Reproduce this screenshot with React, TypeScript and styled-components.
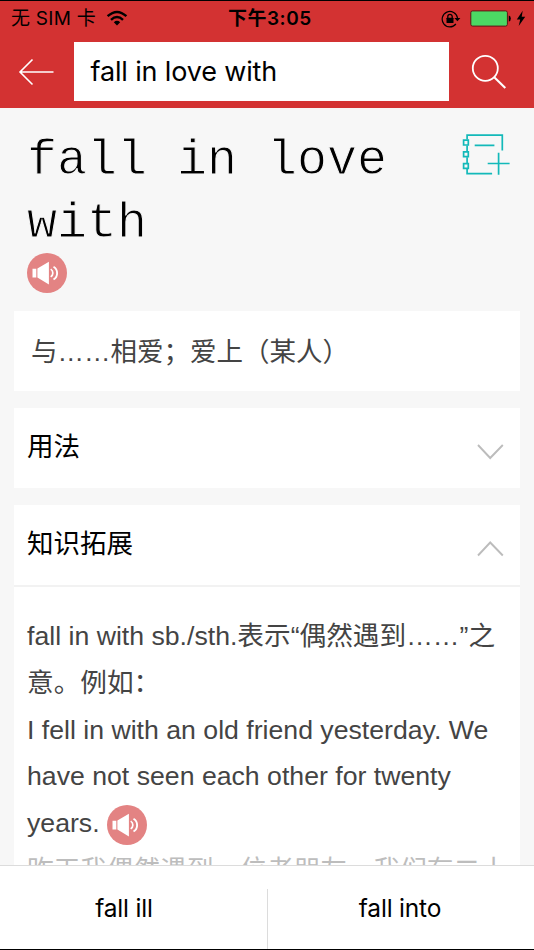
import React from "react";
import styled, { createGlobalStyle } from "styled-components";

const UI_FONT = `Inter, "Noto Sans CJK SC", sans-serif`;
const BODY_FONT = `"Liberation Sans", "Noto Sans CJK SC", sans-serif`;

const GlobalStyle = createGlobalStyle`
  * { box-sizing: border-box; }
  body { margin: 0; background: #f7f7f7; }
  p, h1, h2 { margin: 0; font-weight: 400; }
  button { border: 0; padding: 0; background: none; display: block; }
  svg { display: block; }
`;

const Screen = styled.div`
  width: 534px;
  height: 950px;
  display: flex;
  flex-direction: column;
  overflow: hidden;
  background: #f7f7f7;
  border-top: 1px solid #000;
  border-bottom: 1px solid #000;
`;

const Header = styled.header`
  flex: none;
  height: 107px;
  background: #d33232;
`;

const StatusBar = styled.div`
  height: 41px;
  padding: 0 8px 7px 11px;
  display: grid;
  grid-template-columns: 217px 1fr auto;
  align-items: center;
  font-family: ${UI_FONT};
  font-size: 19px;
  line-height: 34px;
  color: #000;
`;

const StatusGroup = styled.div<{ $gap: number }>`
  display: flex;
  align-items: center;
  gap: ${(p) => p.$gap}px;
  white-space: nowrap;
`;

const CarrierName = styled.span`
  letter-spacing: 0.25px;
`;

const Clock = styled.span`
  padding-top: 1px;
  font-weight: 600;
  font-size: 19px;
  letter-spacing: 0.5px;
  white-space: nowrap;
`;

const SearchRow = styled.div`
  height: 59px;
  display: grid;
  grid-template-columns: 73.5px 375px 85px;
`;

const IconButton = styled.button<{ $nudge?: number }>`
  display: flex;
  align-items: center;
  justify-content: center;
  padding-right: ${(p) => p.$nudge ?? 0}px;
`;

const SearchField = styled.div`
  background: #fff;
  padding-left: 17px;
  font: 400 27px/59px ${UI_FONT};
  letter-spacing: -0.15px;
  white-space: nowrap;
  color: #000;
`;

const Content = styled.main`
  flex: 1;
  min-height: 0;
  overflow: hidden;
  padding: 0 14px 0 13.5px;
`;

const TitleBlock = styled.section`
  height: 203px;
  padding: 21px 9px 0 13.5px;
  display: flex;
  justify-content: space-between;
`;

const Headword = styled.h1`
  width: 400px;
  margin-bottom: -2px;
  font: 400 50px/63px "Liberation Mono", monospace;
  -webkit-text-stroke: 1px #f7f7f7;
  color: #000;
`;

const NotebookSlot = styled.div`
  padding: 5px 1px 0 0;
`;

const Card = styled.section<{ $height?: number }>`
  background: #fff;
  margin-bottom: 17px;
  height: ${(p) => (p.$height ? `${p.$height}px` : "auto")};
`;

const Meaning = styled.p`
  padding: 1px 17.5px;
  font: 400 26.5px/81px ${BODY_FONT};
  color: #444;
  white-space: nowrap;
`;

const CardHeader = styled.div`
  height: 80px;
  padding: 0 16px 0 13.5px;
  display: flex;
  justify-content: space-between;
`;

const CardTitle = styled.h2`
  font: 400 26.5px/78px ${BODY_FONT};
  color: #000;
`;

const ChevronSlot = styled.div`
  padding-top: 35px;
`;

const CardBody = styled.div`
  border-top: 2px solid #f2f2f2;
  padding: 26px 0 0 13.5px;
`;

const TextLine = styled.p<{ $muted?: boolean }>`
  height: 46.8px;
  display: flex;
  align-items: center;
  gap: 7px;
  font: 400 26.67px/46.8px ${BODY_FONT};
  color: ${(p) => (p.$muted ? "#bdbdbd" : "#444")};
  white-space: nowrap;
`;

const InlineSound = styled.span`
  padding-top: 2px;
`;

const BottomBar = styled.nav`
  flex: none;
  height: 84px;
  border-top: 1px solid #dcdcdc;
  background: #fff;
  display: grid;
  grid-template-columns: 267px 267px;
`;

const NavItem = styled.div<{ $divided?: boolean }>`
  margin-top: ${(p) => (p.$divided ? 23 : 0)}px;
  border-left: ${(p) => (p.$divided ? "1px solid #dcdcdc" : "0")};
  padding-right: ${(p) => (p.$divided ? 2 : 19)}px;
  font: 400 24.5px/${(p) => (p.$divided ? 38 : 84)}px ${UI_FONT};
  letter-spacing: -0.2px;
  text-align: center;
  color: #000;
`;

const Wifi = () => (
  <svg width="22" height="17" viewBox="0 0 22 17">
    <g fill="none" stroke="#000" strokeWidth="2.4">
      <path d="M1.6 6.2Q11-2.4 20.4 6.2" />
      <path d="M5 9.8Q11 4.2 17 9.8" />
    </g>
    <path d="M7.8 12.2Q11 9.4 14.2 12.2L11 15.6Z" fill="#000" />
  </svg>
);

const RotationLock = () => (
  <svg width="20" height="18" viewBox="0 0 20 18">
    <path d="M14.9 14A7.7 7.7 0 1 1 16.5 8" fill="none" stroke="#000" strokeWidth="1.2" />
    <path d="M13.4 8H19.4L16.4 11.3Z" fill="#000" />
    <path d="M6.8 8V6.5a2.2 2.2 0 0 1 4.4 0V8" fill="none" stroke="#000" strokeWidth="1.3" />
    <rect x="5.5" y="7.7" width="7" height="5.3" rx="0.6" fill="#000" />
  </svg>
);

const Battery = () => (
  <svg width="42" height="17" viewBox="0 0 42 17">
    <rect x="0.8" y="0.9" width="36.6" height="15.2" rx="1.8" fill="#4cd964" stroke="#5c1616" strokeWidth="1" />
    <path d="M38.8 5.5q2 .5 2 3t-2 3z" fill="#000" />
  </svg>
);

const Bolt = () => (
  <svg width="10" height="17" viewBox="0 0 10 17">
    <path d="M6.7 0.8 0.8 9.5H4.2L2.7 16 9.2 6.8H5.7Z" fill="#000" />
  </svg>
);

const BackArrow = () => (
  <svg width="36" height="28" viewBox="0 0 36 28">
    <path d="M14.5 1.5 2 14l12.5 12.5M2 14h33.5" fill="none" stroke="#fff" strokeWidth="1.6" />
  </svg>
);

const SearchIcon = () => (
  <svg width="36" height="36" viewBox="0 0 36 36">
    <circle cx="14.3" cy="14.3" r="12.5" fill="none" stroke="#fff" strokeWidth="1.8" />
    <path d="m23 23 11.3 11" stroke="#fff" strokeWidth="2.1" />
  </svg>
);

const NotebookPlus = () => (
  <svg width="48" height="42" viewBox="0 0 48 42">
    <g fill="none" stroke="#13b9b9" strokeWidth="1.7">
      <path d="M5.1 5.5V1.2H40.3V16.5M5.1 11.6V17.2M5.1 23.3V28.9M5.1 35V39.6H30.1" />
      <path d="M12.7 11.3H32.4M25.7 29.5H47.6M36.6 18.8V40.7" />
      <path d="M1.6 6.2H6.3V11H1.6ZM1.6 17.9H6.3V22.7H1.6ZM1.6 29.6H6.3V34.4H1.6Z" />
    </g>
  </svg>
);

const Speaker = () => (
  <svg width="40" height="40" viewBox="0 0 40 40">
    <circle cx="20" cy="20" r="20" fill="#e38383" />
    <path d="M5.5 15.8H9.3V24.4H5.5ZM10.4 15.5 21.9 8.7V31.4L10.4 24.6Z" fill="#fff" />
    <path d="M23.7 16.1a4.6 4.6 0 0 1 0 7.8" fill="none" stroke="#fff" strokeWidth="1.7" />
    <path d="M26.5 13.8a7.4 7.4 0 0 1 0 12.7" fill="none" stroke="#fff" strokeWidth="1.9" />
  </svg>
);

const Chevron = ({ up }: { up?: boolean }) => (
  <svg width="28" height="18" viewBox="0 0 28 18">
    <path d={up ? "M2 15.5 14.2 2.5 26.8 15.5" : "M2 2 14.2 15 26.8 2"} fill="none" stroke="#bcbcbc" strokeWidth="1.9" />
  </svg>
);

export default function App() {
  return (
    <>
      <GlobalStyle />
      <Screen lang="zh-CN">
        <Header>
          <StatusBar>
            <StatusGroup $gap={10}>
              <CarrierName>无 SIM 卡</CarrierName>
              <Wifi />
            </StatusGroup>
            <Clock>下午3:05</Clock>
            <StatusGroup $gap={9}>
              <RotationLock />
              <StatusGroup $gap={4}>
                <Battery />
                <Bolt />
              </StatusGroup>
            </StatusGroup>
          </StatusBar>
          <SearchRow>
            <IconButton $nudge={1} aria-label="返回"><BackArrow /></IconButton>
            <SearchField>fall in love with</SearchField>
            <IconButton $nudge={5} aria-label="搜索"><SearchIcon /></IconButton>
          </SearchRow>
        </Header>

        <Content>
          <TitleBlock>
            <div>
              <Headword>fall in love with</Headword>
              <IconButton aria-label="发音"><Speaker /></IconButton>
            </div>
            <NotebookSlot><NotebookPlus /></NotebookSlot>
          </TitleBlock>

          <Card $height={80}>
            <Meaning>与……相爱；爱上（某人）</Meaning>
          </Card>

          <Card $height={80}>
            <CardHeader>
              <CardTitle>用法</CardTitle>
              <ChevronSlot><Chevron /></ChevronSlot>
            </CardHeader>
          </Card>

          <Card>
            <CardHeader>
              <CardTitle>知识拓展</CardTitle>
              <ChevronSlot><Chevron up /></ChevronSlot>
            </CardHeader>
            <CardBody>
              <TextLine>fall in with sb./sth.表示“偶然遇到……”之</TextLine>
              <TextLine>意。例如：</TextLine>
              <TextLine>I fell in with an old friend yesterday. We</TextLine>
              <TextLine>have not seen each other for twenty</TextLine>
              <TextLine>years. <InlineSound><Speaker /></InlineSound></TextLine>
              <TextLine $muted>昨天我偶然遇到一位老朋友，我们有二十</TextLine>
            </CardBody>
          </Card>
        </Content>

        <BottomBar>
          <NavItem>fall ill</NavItem>
          <NavItem $divided>fall into</NavItem>
        </BottomBar>
      </Screen>
    </>
  );
}
